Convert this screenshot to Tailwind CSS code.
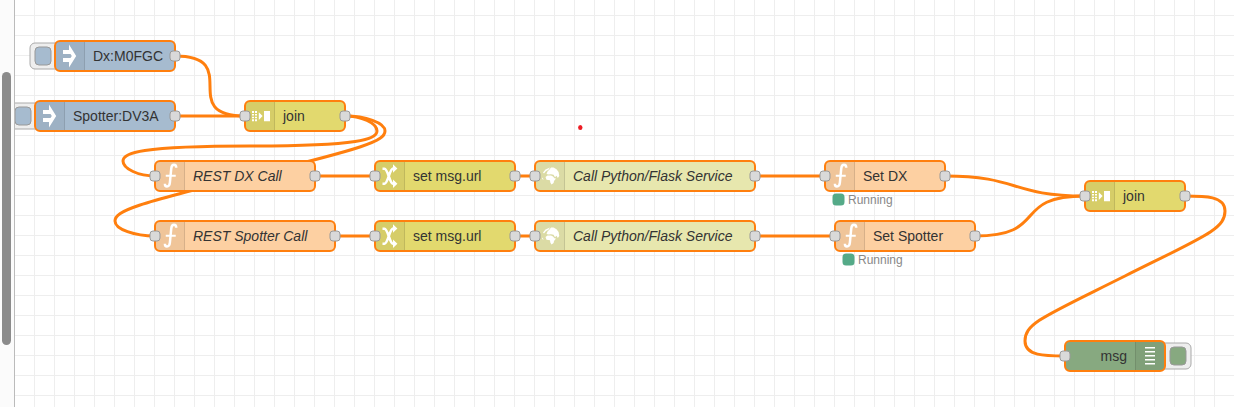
<!DOCTYPE html>
<html lang="en">
<head>
<meta charset="utf-8">
<title>Flow editor</title>
<script src="https://cdn.jsdelivr.net/npm/@tailwindcss/browser@4"></script>
</head>
<body class="h-[407px] w-[1234px] overflow-hidden bg-white font-['Liberation_Sans',Arial,sans-serif]">
<div class="flex h-[407px] w-[1234px]">
  <aside class="h-full w-[15px] shrink-0 border-r border-[#bbbbbb] bg-[#fbfbfb] pt-[72px] pl-[2px]">
    <div class="h-[273px] w-[9px] rounded-full bg-[#8b8b8b]"></div>
  </aside>
  <main class="h-full grow overflow-hidden">
    <svg class="block h-[407px] w-[1219px]" viewBox="15 0 1219 407">
      <defs>
        <pattern id="grid" x="34" y="15" width="20" height="20" patternUnits="userSpaceOnUse">
          <path class="fill-[#eeeeee]" d="M0 0H20V1H1V20H0Z"/>
        </pattern>
        <g id="port"><rect class="fill-[#d9d9d9] stroke-[#999999]" x="-5" y="-5" width="10" height="10" rx="3"/></g>
        <g id="shade">
          <path class="fill-black/5" d="M5 0H30V30H5a5 5 0 0 1-5-5V5a5 5 0 0 1 5-5Z"/>
          <path class="fill-none stroke-black/10" d="M29.500 1V29"/>
        </g>
        <g id="i-inject"><path class="fill-white" d="M8 9H14V3.500L21.200 15 14 26.500V21H8V17H15.500L16.800 15 15.500 13H8Z"/></g>
        <g id="i-join" class="fill-white">
          <path d="M7 10h2v2H7zM10 10h2v2h-2zM7 13h2v1.500H7zM10 13h2v1.500h-2zM7 15.700h2v1.500H7zM10 15.700h2v1.500h-2zM7 18.300h2v2H7zM10 18.300h2v2h-2z"/>
          <path d="M13.800 11.200 17.600 15.100 13.800 19ZM19 10h6v10.200h-6z"/>
        </g>
        <g id="i-fn" class="fill-none stroke-white" transform="translate(5 0) scale(.5)">
          <path class="stroke-[5]" d="M32.500 13.500C32.500 9.500 30.500 7.500 28 7.500 24 7.500 22.800 11 22.400 16L19.800 43C19.300 49 17.500 51 14 51 11 51 9.800 49.500 9.800 45.500"/>
          <path class="stroke-[4]" d="M11.500 29.500H31.500"/>
        </g>
        <g id="i-change">
          <path class="fill-none stroke-white stroke-[2.600]" d="M7.500 7.800h2C13 8 14.500 22.500 18 22.700H19M7.500 22.700h2C13 22.500 14.500 8 18 7.500H19"/>
          <path class="fill-white" d="M18 3.200 22.400 7.500 18 11.800ZM18 18.400 22.400 22.700 18 27Z"/>
        </g>
        <g id="i-globe" class="fill-white">
          <path d="M8 11.500 10.500 8.500 15 6.500 13.500 8.800 11 10 9 12.500ZM12.500 10.500 14.500 8.500 16 6.500 18.500 6.500 21.500 8.300 23.600 11 24.300 15 22.800 17 21.500 14.800 20 16.200 18.500 13.700 16 13.200 13.500 13.500 11.500 13ZM10.500 16 12.500 14.500 16 14.500 18 15.500 19.500 17.300 21 17.500 19 20 18.600 22 16.500 23.500 15.300 21.500 15 19.200 11.500 18.800ZM7 16.500 8 17.200 8.500 19 7.300 18Z"/>
        </g>
      </defs>

      <rect x="15" width="1219" height="407" fill="url(#grid)"/>

      <g class="fill-none stroke-[#ff7f0e] stroke-[3]">
        <path d="M175 56C244.150 56 175.850 116 245 116"/>
        <path d="M175 116H245"/>
        <path d="M345 116C361 116 377 123 377 131S361 146 250 146S123 153 123 161S139 176 155 176"/>
        <path d="M345 116C365 116 385 122.500 385 131C385 141 365 148 250 176C135 204 115 211 115 221C115 229.500 135 236 155 236"/>
        <path d="M315 176H375M515 176H535M755 176H825M335 236H375M515 236H535M755 236H835"/>
        <path d="M945 176C1020 176 1010 196 1085 196"/>
        <path d="M975 236C1050 236 1010 196 1085 196"/>
        <path d="M1185 196C1205 196 1225 196 1225 211C1225 229 1205 236 1125 276C1045 316 1025 323 1025 341C1025 356 1045 356 1065 356"/>
      </g>

      <g class="stroke-[#aaaaaa]">
        <rect class="fill-[#eeeeee]" x="30" y="43" width="32" height="26" rx="5"/>
        <rect class="fill-[#a6bbcf] stroke-[#999999]" x="35" y="47" width="16" height="18" rx="4"/>
        <rect class="fill-[#eeeeee]" x="10" y="103" width="32" height="26" rx="5"/>
        <rect class="fill-[#a6bbcf] stroke-[#999999]" x="15" y="107" width="16" height="18" rx="4"/>
        <rect class="fill-[#eeeeee]" x="1159" y="343" width="32" height="26" rx="5"/>
        <rect class="fill-[#87a980] stroke-[#999999]" x="1170" y="347" width="16" height="18" rx="4"/>
      </g>

      <g>
        <rect class="fill-[#a6bbcf]" x="55" y="41" width="120" height="30" rx="5"/>
        <rect class="fill-[#a6bbcf]" x="35" y="101" width="140" height="30" rx="5"/>
        <rect class="fill-[#e2d96e]" x="245" y="101" width="100" height="30" rx="5"/>
        <rect class="fill-[#fdd0a2]" x="155" y="161" width="160" height="30" rx="5"/>
        <rect class="fill-[#fdd0a2]" x="155" y="221" width="180" height="30" rx="5"/>
        <rect class="fill-[#e2d96e]" x="375" y="161" width="140" height="30" rx="5"/>
        <rect class="fill-[#e2d96e]" x="375" y="221" width="140" height="30" rx="5"/>
        <rect class="fill-[#e7e7ae]" x="535" y="161" width="220" height="30" rx="5"/>
        <rect class="fill-[#e7e7ae]" x="535" y="221" width="220" height="30" rx="5"/>
        <rect class="fill-[#fdd0a2]" x="825" y="161" width="120" height="30" rx="5"/>
        <rect class="fill-[#fdd0a2]" x="835" y="221" width="140" height="30" rx="5"/>
        <rect class="fill-[#e2d96e]" x="1085" y="181" width="100" height="30" rx="5"/>
        <rect class="fill-[#87a980]" x="1065" y="341" width="100" height="30" rx="5"/>
      </g>

      <use href="#shade" x="55" y="41"/><use href="#i-inject" x="55" y="41"/>
      <use href="#shade" x="35" y="101"/><use href="#i-inject" x="35" y="101"/>
      <use href="#shade" x="245" y="101"/><use href="#i-join" x="245" y="101"/>
      <use href="#shade" x="155" y="161"/><use href="#i-fn" x="155" y="161"/>
      <use href="#shade" x="155" y="221"/><use href="#i-fn" x="155" y="221"/>
      <use href="#shade" x="375" y="161"/><use href="#i-change" x="375" y="161"/>
      <use href="#shade" x="375" y="221"/><use href="#i-change" x="375" y="221"/>
      <use href="#shade" x="535" y="161"/><use href="#i-globe" x="535" y="161"/>
      <use href="#shade" x="535" y="221"/><use href="#i-globe" x="535" y="221"/>
      <use href="#shade" x="825" y="161"/><use href="#i-fn" x="825" y="161"/>
      <use href="#shade" x="835" y="221"/><use href="#i-fn" x="835" y="221"/>
      <use href="#shade" x="1085" y="181"/><use href="#i-join" x="1085" y="181"/>
      <path class="fill-black/5" d="M1135 341h25a5 5 0 0 1 5 5v20a5 5 0 0 1-5 5h-25z"/>
      <path class="fill-none stroke-black/10" d="M1135.500 342v28"/>
      <path class="fill-white" d="M1145 347h10v1.500h-10zM1145 351h10v1.500h-10zM1145 355h10v1.500h-10zM1145 359h10v1.500h-10zM1145 363h10v1.500h-10z"/>

      <g class="fill-none stroke-[#ff7f0e] stroke-2">
        <rect x="55" y="41" width="120" height="30" rx="5"/><rect x="35" y="101" width="140" height="30" rx="5"/>
        <rect x="245" y="101" width="100" height="30" rx="5"/><rect x="155" y="161" width="160" height="30" rx="5"/>
        <rect x="155" y="221" width="180" height="30" rx="5"/><rect x="375" y="161" width="140" height="30" rx="5"/>
        <rect x="375" y="221" width="140" height="30" rx="5"/><rect x="535" y="161" width="220" height="30" rx="5"/>
        <rect x="535" y="221" width="220" height="30" rx="5"/><rect x="825" y="161" width="120" height="30" rx="5"/>
        <rect x="835" y="221" width="140" height="30" rx="5"/><rect x="1085" y="181" width="100" height="30" rx="5"/>
        <rect x="1065" y="341" width="100" height="30" rx="5"/>
      </g>

      <use href="#port" x="175" y="56"/><use href="#port" x="175" y="116"/>
      <use href="#port" x="245" y="116"/><use href="#port" x="345" y="116"/>
      <use href="#port" x="155" y="176"/><use href="#port" x="315" y="176"/>
      <use href="#port" x="155" y="236"/><use href="#port" x="335" y="236"/>
      <use href="#port" x="375" y="176"/><use href="#port" x="515" y="176"/>
      <use href="#port" x="375" y="236"/><use href="#port" x="515" y="236"/>
      <use href="#port" x="535" y="176"/><use href="#port" x="755" y="176"/>
      <use href="#port" x="535" y="236"/><use href="#port" x="755" y="236"/>
      <use href="#port" x="825" y="176"/><use href="#port" x="945" y="176"/>
      <use href="#port" x="835" y="236"/><use href="#port" x="975" y="236"/>
      <use href="#port" x="1085" y="196"/><use href="#port" x="1185" y="196"/>
      <use href="#port" x="1065" y="356"/>

      <g class="fill-[#333333] text-[14px]">
        <text x="93" y="61">Dx:M0FGC</text>
        <text x="73" y="121">Spotter:DV3A</text>
        <text x="283" y="121">join</text>
        <text class="italic" x="193" y="181">REST DX Call</text>
        <text class="italic" x="193" y="241">REST Spotter Call</text>
        <text x="413" y="181">set msg.url</text>
        <text x="413" y="241">set msg.url</text>
        <text class="italic" x="573" y="181">Call Python/Flask Service</text>
        <text class="italic" x="573" y="241">Call Python/Flask Service</text>
        <text x="863" y="181">Set DX</text>
        <text x="873" y="241">Set Spotter</text>
        <text x="1123" y="201">join</text>
        <text x="1127" y="361" text-anchor="end">msg</text>
      </g>

      <g class="fill-[#55aa88] stroke-[#55aa88] stroke-[3]">
        <rect x="834" y="195" width="9" height="9" rx="2"/>
        <rect x="844" y="255" width="9" height="9" rx="2"/>
      </g>
      <g class="fill-[#888888] text-[12px]">
        <text x="848" y="204">Running</text>
        <text x="858" y="264">Running</text>
      </g>

      <ellipse class="fill-[#ed1c24]" cx="580.300" cy="127.500" rx="2.200" ry="2.500"/>
    </svg>
  </main>
</div>
</body>
</html>
